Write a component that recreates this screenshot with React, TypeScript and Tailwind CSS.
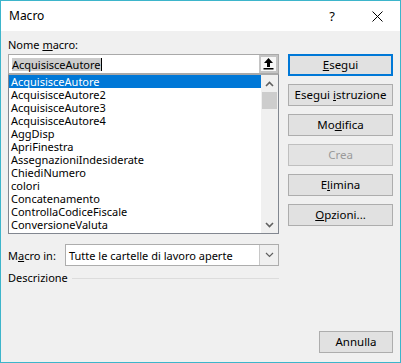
import React from "react";

const items = [
  "AcquisisceAutore",
  "AcquisisceAutore2",
  "AcquisisceAutore3",
  "AcquisisceAutore4",
  "AggDisp",
  "ApriFinestra",
  "AssegnazioniIndesiderate",
  "ChiediNumero",
  "colori",
  "Concatenamento",
  "ControllaCodiceFiscale",
  "ConversioneValuta",
];

function Btn({
  children,
  primary,
  disabled,
  className = "",
}: {
  children: React.ReactNode;
  primary?: boolean;
  disabled?: boolean;
  className?: string;
}) {
  return (
    <div
      className={
        "h-[22px] flex items-center justify-center text-[11.5px] leading-none " +
        (primary
          ? "border-2 border-[#0078d7] bg-[#e1e1e1] text-black "
          : disabled
          ? "border border-[#bfbfbf] bg-[#e3e3e3] text-[#9a9a9a] "
          : "border border-[#adadad] bg-[#e1e1e1] text-black ") +
        className
      }
    >
      {children}
    </div>
  );
}

export default function App() {
  return (
    <div
      className="w-[401px] h-[363px] border border-[#3db5cb] bg-[#f0f0f0] flex flex-col text-black"
      style={{ fontFamily: '"Noto Sans", "Open Sans", sans-serif' }}
    >
      {/* title bar */}
      <div className="h-[30px] bg-white flex items-center shrink-0">
        <div className="pl-[8px] text-[12px] leading-none flex-1">Macro</div>
        <div className="w-[40px] text-[13px] leading-none text-center mr-[2px]">?</div>
        <div className="w-[46px] flex justify-center">
          <svg width="11" height="11" viewBox="0 0 11 11">
            <path d="M0.5 0.5 L10.5 10.5 M10.5 0.5 L0.5 10.5" stroke="#000" strokeWidth="1" />
          </svg>
        </div>
      </div>

      {/* body */}
      <div className="flex-1 flex flex-col pl-[7px] pr-[7px] pb-[9px]">
        <div className="flex">
          {/* left column */}
          <div className="w-[271px] flex flex-col">
            <div className="h-[16px] mt-[6px] text-[11px] leading-[16px]">
              Nome <span className="underline">m</span>acro:
            </div>
            <div className="h-[20px] mt-[1px] border border-[#a9a9a9] bg-white flex items-center">
              <div className="flex-1 pl-[3px] flex items-center">
                <span className="bg-[#cccccc] text-[11px] leading-[13px]">AcquisisceAutore</span>
                <span className="w-[1px] h-[13px] bg-black" />
              </div>
              <div className="w-[19px] h-[18px] border-[2px] border-[#c4c4c4] bg-[#f7f7f7] flex items-center justify-center">
                <svg width="11" height="12" viewBox="0 0 11 12">
                  <path d="M5.5 0 L10 5 L7 5 L7 9 L4 9 L4 5 L1 5 Z" fill="#000" />
                  <rect x="0.5" y="10" width="10" height="1.5" fill="#000" />
                </svg>
              </div>
            </div>
            <div className="h-[160px] border border-[#828790] border-t-[#a9a9a9] bg-white flex">
              <div className="flex-1 flex flex-col">
                {items.map((it, i) => (
                  <div
                    key={it}
                    className={
                      "h-[13px] pl-[2px] text-[11px] leading-[13px] whitespace-nowrap " +
                      (i === 0 ? "bg-[#0078d7] text-white" : "")
                    }
                  >
                    {it}
                  </div>
                ))}
              </div>
              <div className="w-[17px] bg-[#f0f0f0] flex flex-col">
                <div className="h-[17px] flex items-center justify-center">
                  <svg width="9" height="6" viewBox="0 0 9 6">
                    <path d="M1 5 L4.5 1.5 L8 5" stroke="#606060" strokeWidth="1.6" fill="none" />
                  </svg>
                </div>
                <div className="h-[17px] mx-[1px] bg-[#cdcdcd]" />
                <div className="flex-1" />
                <div className="h-[17px] flex items-center justify-center">
                  <svg width="9" height="6" viewBox="0 0 9 6">
                    <path d="M1 1 L4.5 4.5 L8 1" stroke="#606060" strokeWidth="1.6" fill="none" />
                  </svg>
                </div>
              </div>
            </div>
          </div>

          {/* right column */}
          <div className="ml-[9px] w-[105px] pt-[23px] flex flex-col gap-[8px]">
            <Btn primary>
              <span className="underline">E</span>segui
            </Btn>
            <Btn>
              Esegui&nbsp;<span className="underline">i</span>struzione
            </Btn>
            <Btn>
              Mo<span className="underline">d</span>ifica
            </Btn>
            <Btn disabled>Crea</Btn>
            <Btn>
              E<span className="underline">l</span>imina
            </Btn>
            <Btn>
              <span className="underline">O</span>pzioni...
            </Btn>
          </div>
        </div>

        {/* Macro in */}
        <div className="w-[271px] mt-[10px] flex items-center">
          <div className="w-[57px] text-[11px] leading-none">
            M<span className="underline">a</span>cro in:
          </div>
          <div className="flex-1 h-[22px] border border-[#adadad] bg-white flex items-center">
            <div className="flex-1 pl-[3px] text-[11px] leading-none">Tutte le cartelle di lavoro aperte</div>
            <div className="w-[19px] h-full border-l border-[#c8c8c8] bg-[#f0f0f0] flex items-center justify-center">
              <svg width="9" height="6" viewBox="0 0 9 6">
                <path d="M1 1 L4.5 4.5 L8 1" stroke="#606060" strokeWidth="1.2" fill="none" />
              </svg>
            </div>
          </div>
        </div>

        {/* Descrizione */}
        <div className="w-[271px] mt-[4px] flex items-center">
          <div className="text-[11px] leading-[16px] pr-[4px]">Descrizione</div>
          <div className="flex-1 h-[1px] bg-[#dcdcdc]" />
        </div>

        <div className="flex-1" />
        <div className="flex justify-end">
          <Btn className="w-[74px]">Annulla</Btn>
        </div>
      </div>
    </div>
  );
}
